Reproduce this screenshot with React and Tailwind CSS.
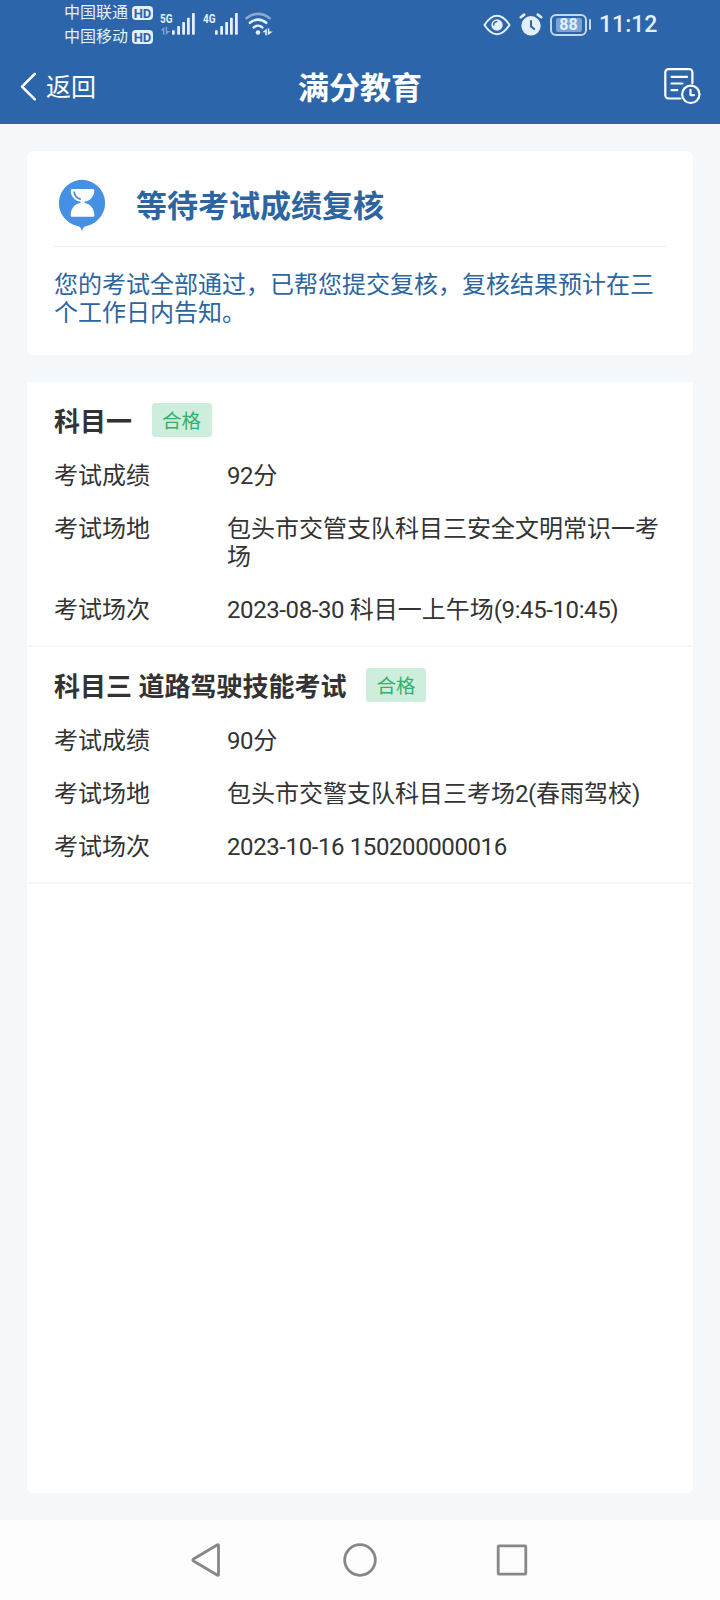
const resultados = [
  {
    titulo: "科目一",
    estado: "合格",
    filas: [
      ["考试成绩", "92分"],
      ["考试场地", "包头市交管支队科目三安全文明常识一考场"],
      ["考试场次", "2023-08-30 科目一上午场(9:45-10:45)"],
    ],
  },
  {
    titulo: "科目三 道路驾驶技能考试",
    estado: "合格",
    filas: [
      ["考试成绩", "90分"],
      ["考试场地", "包头市交警支队科目三考场2(春雨驾校)"],
      ["考试场次", "2023-10-16 150200000016"],
    ],
  },
];

function Operador({ nombre }) {
  return (
    <div className="flex h-6 items-center gap-1">
      <span className="text-[16px] leading-6">{nombre}</span>
      <span className="flex h-[14px] w-[21px] items-center justify-center rounded-[4px] bg-[#e3effb] text-[13px] leading-none font-bold text-[#2c65a9]">
        HD
      </span>
    </div>
  );
}

function Senal({ red, datos }) {
  return (
    <svg width="36" height="24" viewBox="0 0 36 24" fill="#e3effb">
      <text x="0" y="10.5" fontSize="13" fontWeight="700" textLength="12.5" lengthAdjust="spacingAndGlyphs">
        {red}
      </text>
      {datos && (
        <path d="M.6 18.600 4.400 14.800v8H3v-4.200zM5.800 14.800h1.400v4.200h3.200l-4.600 3.800z" opacity="0.45" />
      )}
      <rect x="12" y="18.3" width="2.8" height="4.4" rx="0.8" />
      <rect x="17.2" y="14" width="2.8" height="8.7" rx="0.8" />
      <rect x="22.2" y="10" width="2.8" height="12.7" rx="0.8" />
      <rect x="27" y="5.7" width="2.8" height="17" rx="0.8" />
      <rect x="32" y="1" width="2.8" height="21.7" rx="0.8" />
    </svg>
  );
}

function Wifi() {
  return (
    <svg width="28" height="24" viewBox="0 0 28 24" fill="none" stroke="#e3effb" strokeWidth="2.6" strokeLinecap="round">
      <path d="M1.5 6.2C8 .4 18 .4 24.6 6.2" opacity="0.5" />
      <path d="M5 10.8c4.8-4.3 11.4-4.3 16.2 0" />
      <path d="M8.8 15.4c2.5-2.3 6-2.3 8.5 0" />
      <circle cx="13" cy="20.5" r="2.3" fill="#e3effb" stroke="none" />
      <path d="M17.400 20.200 21.800 16.400v6.800h-1.600v-3zM22.800 16.400h1.500v3h3.500L22.800 23.200z" fill="#e3effb" stroke="none" />
    </svg>
  );
}

function Ojo() {
  return (
    <svg width="28" height="22" viewBox="0 0 28 22" fill="none" stroke="#e3effb" strokeWidth="2">
      <path d="M1.5 11C6 4 10 1.8 14 1.8S22 4 26.5 11C22 18 18 20.2 14 20.2S6 18 1.5 11z" strokeLinejoin="round" />
      <circle cx="14" cy="11" r="5.7" fill="#e3effb" stroke="none" />
      <path d="M10.6 11a3.6 3.6 0 0 1 3.2-3.5" stroke="#2c65a9" strokeWidth="1.4" strokeLinecap="round" />
    </svg>
  );
}

function Alarma() {
  return (
    <svg width="24" height="23" viewBox="0 0 24 23" fill="none" strokeLinecap="round">
      <circle cx="12" cy="12.8" r="9.7" fill="#e3effb" />
      <path d="M1.8 4.2 5.2 1.6M22.2 4.2 18.8 1.6" stroke="#e3effb" strokeWidth="2.6" />
      <path d="M12 8v5.4l3.2 2.6" stroke="#2c65a9" strokeWidth="2" />
    </svg>
  );
}

function BarraEstado() {
  return (
    <div className="flex h-[50px] justify-between pr-[64px] pl-[64px] text-[#e3effb]">
      <div className="flex">
        <div className="flex w-[96px] flex-col pt-px">
          <Operador nombre="中国联通" />
          <Operador nombre="中国移动" />
        </div>
        <div className="flex items-start pt-3">
          <Senal red="5G" datos />
          <div className="w-[7px]" />
          <Senal red="4G" />
          <div className="w-[6px]" />
          <Wifi />
        </div>
      </div>
      <div className="flex h-[49px] items-center">
        <Ojo />
        <div className="w-2" />
        <Alarma />
        <div className="ml-[7px] flex h-[22px] w-[37px] items-center justify-center rounded-[6px] border-2 border-[#c3d8f0]">
          <span className="flex h-[14px] w-[26px] items-center justify-center rounded-[2px] bg-[#7ba2d2] text-[16px] leading-none font-bold">
            88
          </span>
        </div>
        <div className="ml-[2px] h-[11px] w-[2px] rounded-full bg-[#c3d8f0]" />
        <span className="ml-2 w-[57px] text-[23px] leading-6 font-medium">11:12</span>
      </div>
    </div>
  );
}

function Encabezado() {
  return (
    <div className="grid h-[74px] grid-cols-3 items-center text-white">
      <button className="flex items-center gap-[9px] pl-[19px]">
        <svg width="18" height="30" viewBox="0 0 18 30" fill="none" stroke="currentColor" strokeWidth="2.6" strokeLinecap="round" strokeLinejoin="round">
          <path d="M15.8 1.800 3 14.600l12.800 12.800" />
        </svg>
        <span className="pt-0.5 text-[25px] leading-8">返回</span>
      </button>
      <h1 className="pt-[3px] text-center text-[31px] leading-10 font-bold">满分教育</h1>
      <div className="flex justify-end pr-[19px] pb-[2px]">
        <svg width="38" height="38" viewBox="0 0 38 38" fill="none" stroke="currentColor" strokeWidth="2.2" strokeLinecap="round" strokeLinejoin="round">
          <path d="M17.5 31.5H5.5a3.2 3.2 0 0 1-3.2-3.2V5.3a3.2 3.2 0 0 1 3.2-3.2h20.700a3.200 3.200 0 0 1 3.200 3.200v11" />
          <path d="M8.500 9.800h15.600M8.500 16.500h11M8.500 23.200h5.800" />
          <circle cx="27.800" cy="27.300" r="8.700" />
          <path d="M27.500 22.800v5.300h3.500" />
        </svg>
      </div>
    </div>
  );
}

function RelojArena() {
  return (
    <svg width="48" height="53" viewBox="0 0 48 53">
      <path d="M24 .8a23.300 23.300 0 0 0-4.600 46.100c2.600.6 3.600 1.800 4.600 5.400 1-3.600 2-4.800 4.600-5.400A23.300 23.300 0 0 0 24 .8z" fill="#4590e2" />
      <path d="M14.200 10h20.600c1 0 1.500.5 1.500 1.500 0 6-4.300 10.600-9.800 11.100v1.300c5.500.6 9.800 5.200 9.800 12.300 0 1-.5 1.500-1.500 1.500H14.200c-1 0-1.500-.5-1.500-1.500 0-7.100 4.300-11.700 9.800-12.300v-1.300c-5.500-.5-9.800-5.100-9.800-11.100 0-1 .5-1.500 1.500-1.500z" fill="#fff" />
      <path d="M16.200 13.200c.5 3.800 2.600 6 6 6.900" fill="none" stroke="#4590e2" strokeWidth="1.700" strokeLinecap="round" />
    </svg>
  );
}

function Seccion({ titulo, estado, filas }) {
  return (
    <section className="flex flex-col gap-[25px] border-b-2 border-[#f4f8fa] px-[27px] py-[21px]">
      <div className="flex h-[34px] items-center gap-5">
        <h2 className="pt-[3px] text-[26px] leading-8 font-bold">{titulo}</h2>
        <span className="flex h-[34px] w-[60px] items-center justify-center rounded-[3px] bg-[#ceeedd] pt-1 pr-px text-[19.5px] leading-7 text-[#35b06c]">
          {estado}
        </span>
      </div>
      {filas.map(([etiqueta, valor]) => (
        <div key={etiqueta} className="flex text-[24px] leading-7">
          <span className="w-[173px] shrink-0">{etiqueta}</span>
          <span className="flex-1 break-all">
            {/* cifras y signos van un poco más juntos que los caracteres chinos */}
            {valor.split(/([\x20-\x7e]+)/).map((parte, i) => (
              <span key={i} className={i % 2 ? "tracking-[-0.4px]" : ""}>
                {parte}
              </span>
            ))}
          </span>
        </div>
      ))}
    </section>
  );
}

export default function App() {
  return (
    <div className="flex h-[1600px] w-[720px] flex-col bg-[#f4f8fa] font-[Roboto,'Noto_Sans_CJK_SC',sans-serif] text-[#333333]">
      <header className="h-[124px] shrink-0 bg-[#2c65a9]">
        <BarraEstado />
        <Encabezado />
      </header>

      <main className="flex flex-1 flex-col gap-[27px] p-[27px]">
        {/* aviso de revisión */}
        <section className="h-[204px] shrink-0 rounded-[6px] bg-white px-[27px] text-[#2c659f]">
          <div className="flex h-[96px] items-center border-b border-[#e9eef1] pt-[13px] pl-1">
            <RelojArena />
            <h2 className="ml-[30px] pt-1 text-[31px] leading-10 font-bold">等待考试成绩复核</h2>
          </div>
          <p className="pt-6 text-[24px] leading-7">
            您的考试全部通过，已帮您提交复核，复核结果预计在三个工作日内告知。
          </p>
        </section>

        {/* resultados */}
        <div className="flex-1 rounded-b-[6px] bg-white">
          {resultados.map((r) => (
            <Seccion key={r.titulo} {...r} />
          ))}
        </div>
      </main>

      {/* navegación del sistema */}
      <nav className="flex h-[80px] shrink-0 items-center bg-[#fdfdfd] pl-[190px]">
        <svg width="340" height="36" viewBox="0 0 340 36" fill="none" stroke="#878787" strokeWidth="2.800" strokeLinejoin="round">
          <path d="M28.500 3.200v29.600a.6.600 0 0 1-1 .4L3.500 19a1.200 1.200 0 0 1 0-2L27.500 2.800a.6.600 0 0 1 1 .4z" />
          <circle cx="170" cy="18" r="15.300" />
          <rect x="308.200" y="3.800" width="27.600" height="28.400" rx="1" />
        </svg>
      </nav>
    </div>
  );
}
